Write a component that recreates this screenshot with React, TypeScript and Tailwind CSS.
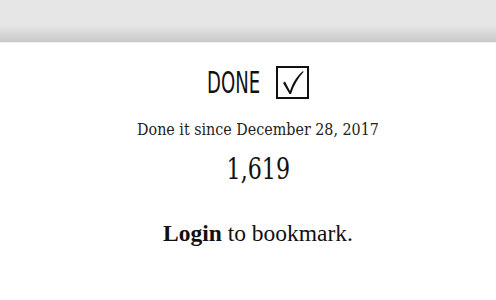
import React from 'react';

export default function App() {
  return (
    <div className="min-h-[300px] bg-white">
      {/* top bar */}
      <div className="h-[43px] bg-gradient-to-b from-[#e6e6e6] from-60% to-[#c8c8c8] border-b border-[#f2f2f2]" />

      <div className="flex flex-col items-center pl-[20px]">
        <div className="mt-[23px] flex items-center gap-[15px]">
          <span className="inline-block font-['DejaVu_Sans_Condensed','DejaVu_Sans',sans-serif] text-[30px] leading-none text-[#111] scale-x-[0.67] -mx-[13px]">
            DONE
          </span>
          <svg width="33" height="33" viewBox="0 0 33 33" className="text-[#111]">
            <rect x="1" y="1" width="31" height="31" fill="none" stroke="currentColor" strokeWidth="2" />
            <path d="M7 17 L9 15.5 L14 25 C17 16 21 10 27 5 L27.5 6 C22 12 18 19 15 28 L13.5 28 Z" fill="currentColor" />
          </svg>
        </div>

        <p className="mt-[23px] font-['DejaVu_Serif_Condensed','DejaVu_Serif',serif] text-[15.9px] leading-none text-[#222]">
          Done it since December 28, 2017
        </p>

        <p className="mt-[17px] inline-block font-['DejaVu_Serif_Condensed','DejaVu_Serif',serif] text-[29px] leading-none text-[#111] scale-x-[0.85]">
          1,619
        </p>

        <p className="mt-[38px] font-['Liberation_Serif',serif] text-[23.5px] leading-none text-[#111]">
          <span className="font-bold">Login</span> to bookmark.
        </p>
      </div>
    </div>
  );
}
